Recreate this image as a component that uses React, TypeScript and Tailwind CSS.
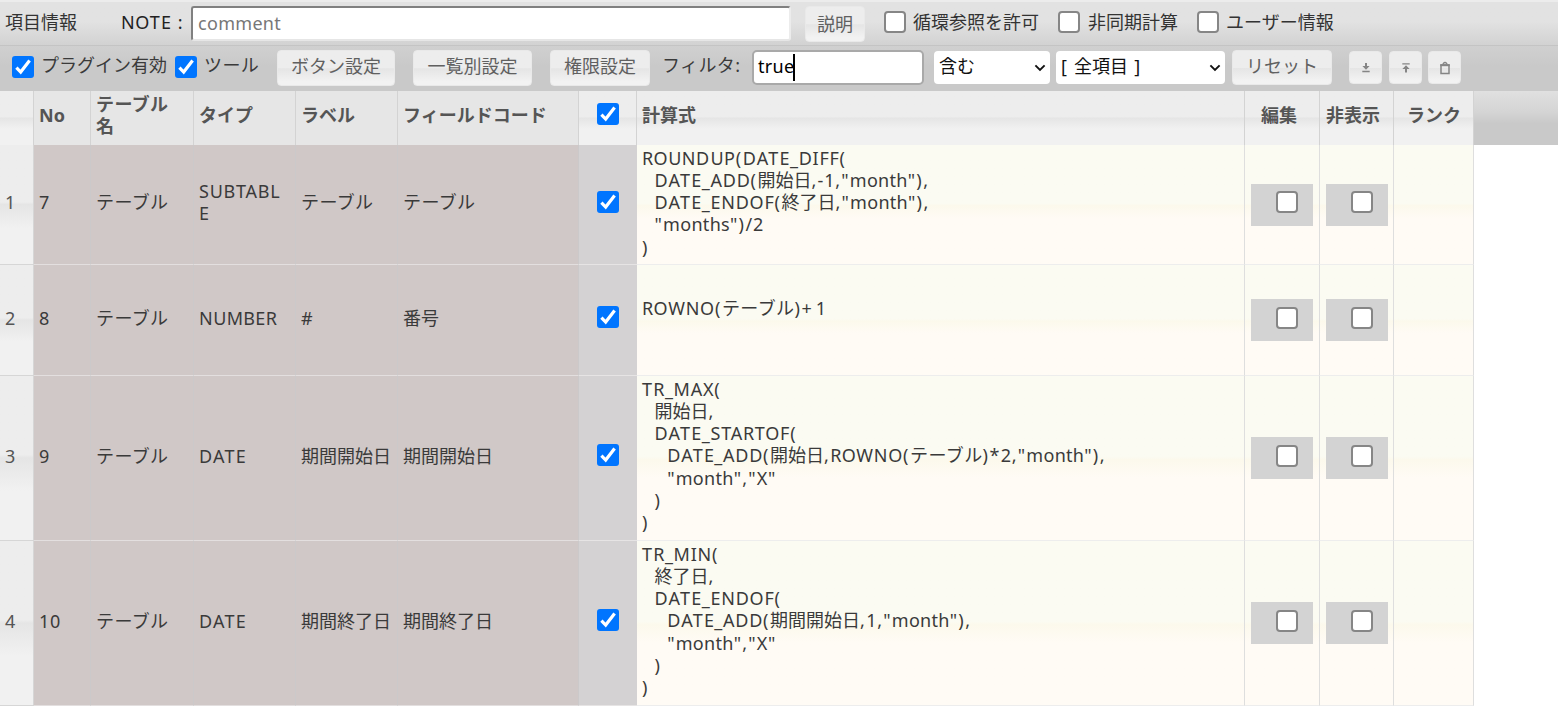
import React from "react";

const RUNS = /([ADT]+|[NOU]+|[EBR]+|M+|[A-Z_]+|[a-z]+|[() ]+|[+]+|[",*]+|[0-9]+|[\u30a0-\u30ff]+)/;

function spacing(run: string) {
  if (/^[ADT]/.test(run)) return "tracking-[1.25px]";
  if (/^[NOU]/.test(run)) return "tracking-[0.5px]";
  if (/^[EBR]/.test(run)) return "tracking-[0.4px]";
  if (/^M/.test(run)) return "tracking-[0px]";
  if (/^[a-z]/.test(run)) return "tracking-[0.3px]";
  if (/^[() ]/.test(run)) return "tracking-[1.6px]";
  if (/^[+]/.test(run)) return "tracking-[4px]";
  if (/^[",*]/.test(run)) return "tracking-[1.2px]";
  if (/^[\u30a0-\u30ff]/.test(run)) return "tracking-[0.4px]";
  if (/^[\x21-\x7e]/.test(run)) return "tracking-[0.75px]";
  return "";
}

function Txt({ children }: { children: string }) {
  return (
    <>
      {children.split(RUNS).map((run, i) => (
        <span key={i} className={spacing(run)}>
          {run}
        </span>
      ))}
    </>
  );
}

function Check({ on = false }: { on?: boolean }) {
  return on ? (
    <span className="flex size-[22px] shrink-0 items-center justify-center rounded-[3px] bg-[#0075ff]">
      <svg viewBox="0 0 22 22" className="size-[22px]" fill="none" stroke="#fff" strokeWidth="3.2">
        <path d="M4.4 11.6 L8.7 16 L17.6 4.6" />
      </svg>
    </span>
  ) : (
    <span className="size-[22px] shrink-0 rounded-[4px] border-2 border-[#868686] bg-white" />
  );
}

function Btn({ children, className }: { children: React.ReactNode; className: string }) {
  return (
    <button
      className={`flex shrink-0 items-center justify-center rounded-[4px] border border-[#e9e9e9] bg-linear-to-b from-[#ededed] from-50% via-[#e5e5e5] via-52% to-[#f2f2f2] to-90% text-[#606060] ${className}`}
    >
      {children}
    </button>
  );
}

function Select({ value, className }: { value: string; className: string }) {
  return (
    <div className={`flex h-[33px] shrink-0 items-center justify-between rounded-[4px] bg-white pr-1 pl-[5px] text-[#111] ${className}`}>
      <span className="-mt-[3px] whitespace-pre">
        <Txt>{value}</Txt>
      </span>
      <svg viewBox="0 0 12 8" className="h-2 w-3" fill="none" stroke="#111" strokeWidth="1.9">
        <path d="M1.4 1.4 L6 6 L10.6 1.4" />
      </svg>
    </div>
  );
}

const GRID =
  "grid w-[1474px] grid-cols-[34px_57px_103px_102px_102px_181px_58px_608px_75px_74px_80px]";

const HEAD_GRAD = "bg-linear-to-b from-[#ededed] from-48% via-[#e5e5e5] via-50% to-[#f1f1f1] to-70%";
const HEAD = "flex items-center border-r border-[#d3d3d3] pl-[5px]";
const FIXED = "flex items-center border-r border-b border-r-[#cbc9ca] border-b-[#e3dfdf] bg-[#d0c8c7] pl-[5px] pb-[5px] break-all";
const CREAM =
  "border-r border-b border-r-[#dedede] border-b-[#ededed] bg-linear-to-b from-[#fbfbf2] from-49% via-[#fcf9ec] via-51% to-[#fffbf5] to-62%";

type Row = {
  no: string;
  type: string;
  label: string;
  code: string;
  formula: string;
  height: string;
  pad: string;
};

const rows: Row[] = [
  {
    no: "7",
    type: "SUBTABLE",
    label: "テーブル",
    code: "テーブル",
    formula:
      'ROUNDUP(DATE_DIFF(\n  DATE_ADD(開始日,-1,"month"),\n  DATE_ENDOF(終了日,"month"),\n  "months")/2\n)',
    height: "h-[120px]",
    pad: "pt-[2px]",
  },
  {
    no: "8",
    type: "NUMBER",
    label: "#",
    code: "番号",
    formula: "ROWNO(テーブル)+1",
    height: "h-[111px]",
    pad: "pt-[32px]",
  },
  {
    no: "9",
    type: "DATE",
    label: "期間開始日",
    code: "期間開始日",
    formula:
      'TR_MAX(\n  開始日,\n  DATE_STARTOF(\n    DATE_ADD(開始日,ROWNO(テーブル)*2,"month"),\n    "month","X"\n  )\n)',
    height: "h-[165px]",
    pad: "pt-[2px]",
  },
  {
    no: "10",
    type: "DATE",
    label: "期間終了日",
    code: "期間終了日",
    formula:
      'TR_MIN(\n  終了日,\n  DATE_ENDOF(\n    DATE_ADD(期間開始日,1,"month"),\n    "month","X"\n  )\n)',
    height: "h-[165px]",
    pad: "pt-[2px]",
  },
];

function Toggle() {
  return (
    <div className={`flex items-center pl-[6px] ${CREAM}`}>
      <div className="flex h-[42px] w-[62px] items-center justify-end bg-[#d3d3d3] pr-[15px] pb-[5px]">
        <Check />
      </div>
    </div>
  );
}

export default function App() {
  return (
    <div className="h-[726px] w-[1558px] overflow-hidden bg-white font-['Noto_Sans','Noto_Sans_CJK_JP',sans-serif] text-[18px] leading-[22px] text-[#3a3a3a]">
      <div className="flex h-[45px] border-t-2 border-[#ececec] bg-linear-to-b from-[#e2e2e2] from-45% to-[#d2d2d2] text-[#333]">
        <span className="ml-[5px] w-[116px] shrink-0 pt-[9px]">項目情報</span>
        <span className="w-[69px] shrink-0 pt-[9px] whitespace-pre text-[#222]">
          <Txt>NOTE :</Txt>
        </span>
        <div className="mt-[4px] ml-[1px] flex h-[35px] w-[600px] shrink-0 items-center rounded-[3px] border-2 border-t-[#808080] border-r-[#ececec] border-b-[#e6e6e6] border-l-[#808080] bg-white pl-[5px] text-[#777]">
          <span className="-mt-[2px]">
            <Txt>comment</Txt>
          </span>
        </div>
        <Btn className="mt-1 ml-[14px] h-[36px] w-[60px]">説明</Btn>
        <div className="ml-[19px] flex pt-[9px]">
          <Check />
          <span className="ml-[7px] w-[145px]">循環参照を許可</span>
          <Check />
          <span className="ml-[8px] w-[109px]">非同期計算</span>
          <Check />
          <span className="ml-[7px] whitespace-nowrap">ユーザー情報</span>
        </div>
      </div>

      <div className="flex h-[46px] border-t border-[#c4c4c4] bg-linear-to-b from-[#d0d0d0] to-[#c9c9c9] to-45%">
        <div className="mt-[10px] ml-3 flex w-[265px] shrink-0">
          <Check on />
          <span className="-mt-[2px] ml-[7px] w-[134px] whitespace-nowrap">プラグイン有効</span>
          <Check on />
          <span className="-mt-[2px] ml-[7px]">
            <Txt>ツール</Txt>
          </span>
        </div>
        <Btn className="mt-1 h-[36px] w-[118px] pb-1">ボタン設定</Btn>
        <Btn className="mt-1 ml-[18px] h-[36px] w-[119px] pb-1">一覧別設定</Btn>
        <Btn className="mt-1 ml-[18px] h-[36px] w-[100px] pb-1">権限設定</Btn>
        <span className="mt-2 ml-3 w-[90px] shrink-0">
          <Txt>フィルタ:</Txt>
        </span>
        <div className="mt-1 flex h-[35px] w-[172px] shrink-0 items-center rounded-[5px] border-2 border-[#a9a9a9] bg-white pl-[4px] text-black">
          <span className="-mt-[3px]">
            <Txt>true</Txt>
          </span>
          <span className="-ml-px h-[27px] w-[1.5px] bg-black" />
        </div>
        <Select value="含む" className="mt-[5px] ml-[10px] w-[116px]" />
        <Select value="[ 全項目 ]" className="mt-[5px] ml-[6px] w-[169px]" />
        <Btn className="mt-1 ml-[7px] h-[35px] w-[100px] pb-1">リセット</Btn>
        <Btn className="mt-[5px] ml-[17px] h-[33px] w-[33px]">
          <svg viewBox="0 0 12 12" className="size-3" fill="#858585">
            <path d="M5 1h2v3h2.6L6 7.8 2.4 4H5zM2.3 8.8h7.4v1.4H2.3z" />
          </svg>
        </Btn>
        <Btn className="mt-[5px] ml-[7px] h-[33px] w-[33px]">
          <svg viewBox="0 0 12 12" className="size-3" fill="#858585">
            <path d="M2.3 1.2h7.4v1.3H2.3zM6 3.2l3.6 3.8H7V10.5H5V7H2.4z" />
          </svg>
        </Btn>
        <Btn className="mt-[5px] ml-[6px] h-[33px] w-[33px]">
          <svg viewBox="0 0 12 14" className="h-[14px] w-3" fill="none" stroke="#858585">
            <path d="M2 4h8v8.5H2z" strokeWidth="1.5" />
            <path d="M1.3 4.2h9.4" strokeWidth="2" />
            <path d="M4.2 3.6V2.6Q6 .4 7.8 2.6V3.6" strokeWidth="1.3" />
          </svg>
        </Btn>
      </div>

      <div className="h-[54px] bg-linear-to-b from-[#e0e0e0] via-[#d4d4d4] via-40% to-[#c9c9c9] to-60%">
        <div className={`${GRID} h-[54px] font-bold text-[#555]`}>
          <div className={`${HEAD} ${HEAD_GRAD}`} />
          <div className={`${HEAD} bg-[#e6e6e6] pb-[6px]`}>No</div>
          <div className={`${HEAD} bg-[#e6e6e6] pr-4 pb-[7px]`}>
            <span>
              <Txt>テーブル名</Txt>
            </span>
          </div>
          <div className={`${HEAD} bg-[#e6e6e6] pb-[7px]`}>タイプ</div>
          <div className={`${HEAD} bg-[#e6e6e6] pb-[7px]`}>ラベル</div>
          <div className={`${HEAD} bg-[#e6e6e6] pb-[7px]`}>フィールドコード</div>
          <div className={`flex items-center justify-center border-r border-[#d3d3d3] pb-2 ${HEAD_GRAD}`}>
            <Check on />
          </div>
          <div className={`${HEAD} ${HEAD_GRAD} pb-[7px]`}>計算式</div>
          <div className={`${HEAD} ${HEAD_GRAD} justify-center pr-[11px] pb-[7px]`}>編集</div>
          <div className={`${HEAD} ${HEAD_GRAD} pb-[7px] pl-[6px] whitespace-nowrap`}>非表示</div>
          <div className={`${HEAD} ${HEAD_GRAD} justify-center pr-[4px] pb-[7px]`}>ランク</div>
        </div>
      </div>

      {rows.map((r, i) => (
        <div key={r.no} className={`${GRID} ${r.height}`}>
          <div
            className={`flex items-center border-r border-b border-[#d6d6d6] pb-[5px] pl-[5px] text-[#555] ${HEAD_GRAD}`}
          >
            {i + 1}
          </div>
          <div className={FIXED}>
            <Txt>{r.no}</Txt>
          </div>
          <div className={FIXED}>
            <Txt>テーブル</Txt>
          </div>
          <div className={`${FIXED} pr-[10px]`}>
            <span>
              <Txt>{r.type}</Txt>
            </span>
          </div>
          <div className={`${FIXED} whitespace-nowrap`}>
            <Txt>{r.label}</Txt>
          </div>
          <div className={FIXED}>
            <Txt>{r.code}</Txt>
          </div>
          <div className="flex items-center justify-center border-b border-[#e6e4e4] bg-[#d4d2d3] pb-[6px]">
            <Check on />
          </div>
          <div className={`pl-[5px] leading-[22.15px] whitespace-pre ${CREAM} ${r.pad}`}>
            <Txt>{r.formula}</Txt>
          </div>
          <Toggle />
          <Toggle />
          <div className={CREAM} />
        </div>
      ))}
    </div>
  );
}
